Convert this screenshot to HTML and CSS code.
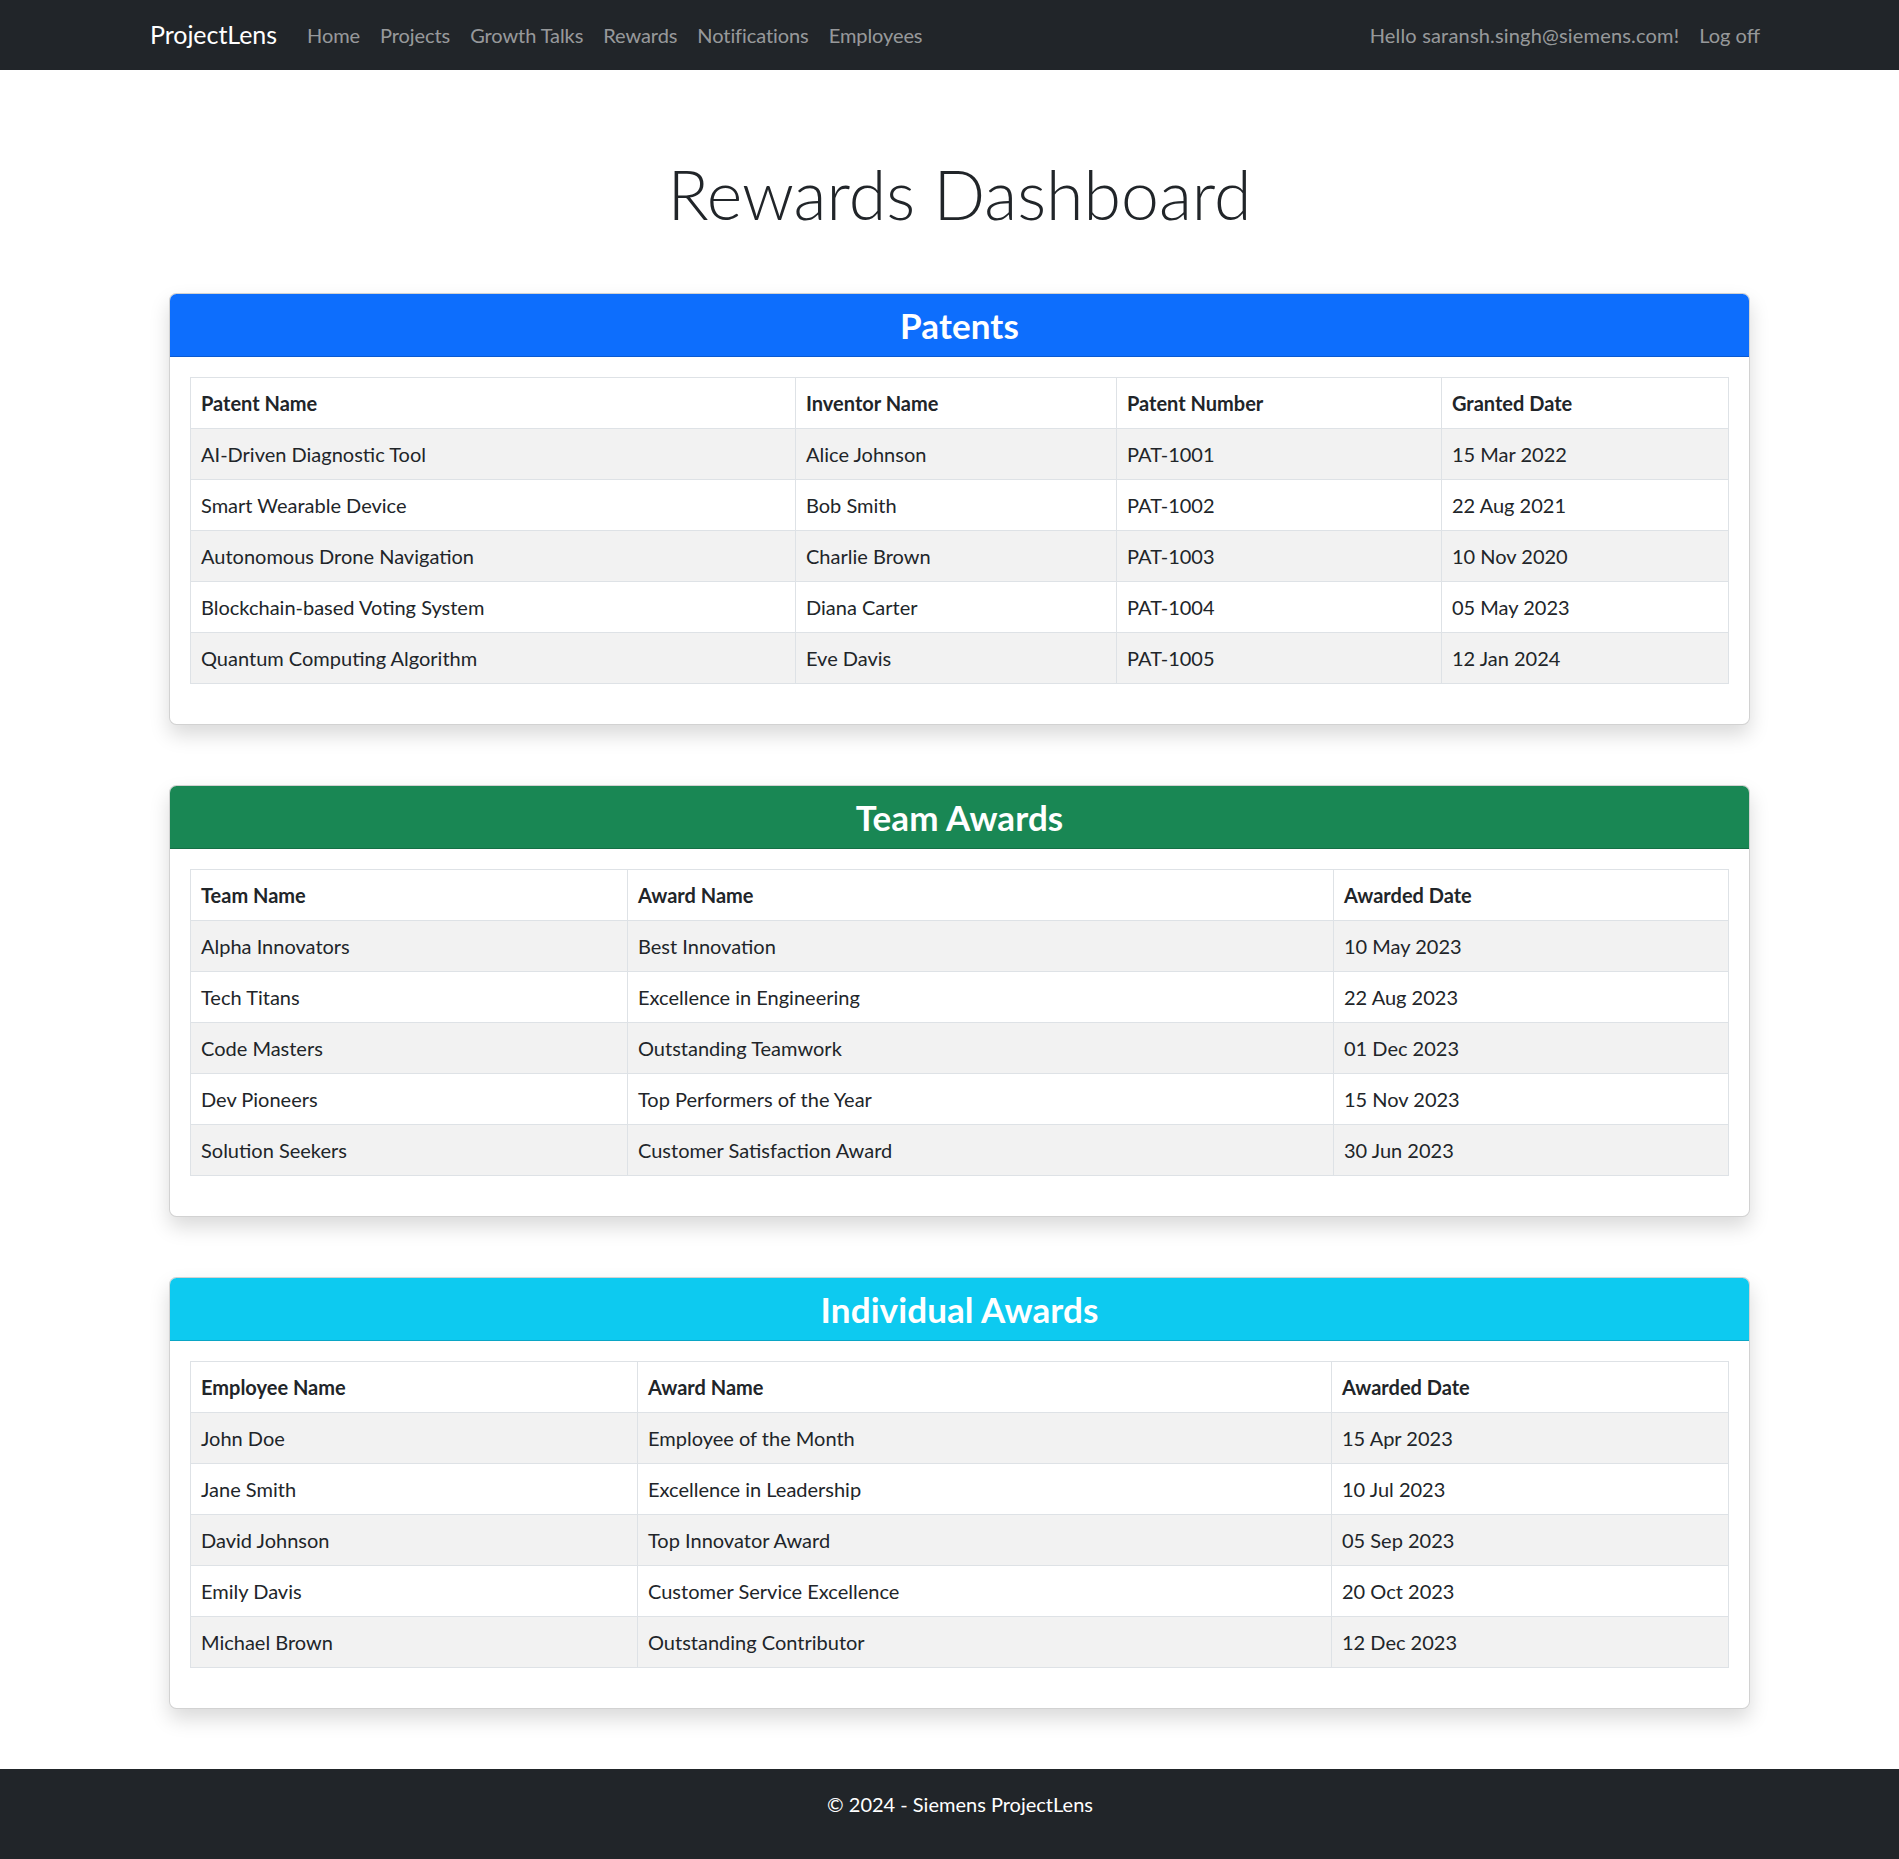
FILE: index.html
```html
<!DOCTYPE html>
<html lang="en">
<head>
<meta charset="utf-8">
<title>Rewards Dashboard - ProjectLens</title>
<link rel="stylesheet" href="styles.css">
</head>
<body>
<header class="navbar">
  <div class="nav-left">
    <a class="brand" href="#">ProjectLens</a>
    <nav class="nav-links">
      <a class="nav-link" href="#">Home</a>
      <a class="nav-link" href="#">Projects</a>
      <a class="nav-link" href="#">Growth Talks</a>
      <a class="nav-link" href="#">Rewards</a>
      <a class="nav-link" href="#">Notifications</a>
      <a class="nav-link" href="#">Employees</a>
    </nav>
  </div>
  <div class="nav-right">
    <a class="nav-link nav-user" href="#">Hello saransh.singh@siemens.com!</a>
    <a class="nav-link" href="#">Log off</a>
  </div>
</header>

<main class="main">
  <h1 class="page-title">Rewards Dashboard</h1>

  <section class="card">
    <div class="card-header header-primary"><h3 class="card-title">Patents</h3></div>
    <div class="card-body">
      <table class="table">
        <colgroup><col class="p1"><col class="p2"><col class="p3"><col></colgroup>
        <thead>
          <tr><th>Patent Name</th><th>Inventor Name</th><th>Patent Number</th><th>Granted Date</th></tr>
        </thead>
        <tbody>
          <tr><td>AI-Driven Diagnostic Tool</td><td>Alice Johnson</td><td>PAT-1001</td><td>15 Mar 2022</td></tr>
          <tr><td>Smart Wearable Device</td><td>Bob Smith</td><td>PAT-1002</td><td>22 Aug 2021</td></tr>
          <tr><td>Autonomous Drone Navigation</td><td>Charlie Brown</td><td>PAT-1003</td><td>10 Nov 2020</td></tr>
          <tr><td>Blockchain-based Voting System</td><td>Diana Carter</td><td>PAT-1004</td><td>05 May 2023</td></tr>
          <tr><td>Quantum Computing Algorithm</td><td>Eve Davis</td><td>PAT-1005</td><td>12 Jan 2024</td></tr>
        </tbody>
      </table>
    </div>
  </section>

  <section class="card">
    <div class="card-header header-success"><h3 class="card-title">Team Awards</h3></div>
    <div class="card-body">
      <table class="table">
        <colgroup><col class="t1"><col class="t2"><col></colgroup>
        <thead>
          <tr><th>Team Name</th><th>Award Name</th><th>Awarded Date</th></tr>
        </thead>
        <tbody>
          <tr><td>Alpha Innovators</td><td>Best Innovation</td><td>10 May 2023</td></tr>
          <tr><td>Tech Titans</td><td>Excellence in Engineering</td><td>22 Aug 2023</td></tr>
          <tr><td>Code Masters</td><td>Outstanding Teamwork</td><td>01 Dec 2023</td></tr>
          <tr><td>Dev Pioneers</td><td>Top Performers of the Year</td><td>15 Nov 2023</td></tr>
          <tr><td>Solution Seekers</td><td>Customer Satisfaction Award</td><td>30 Jun 2023</td></tr>
        </tbody>
      </table>
    </div>
  </section>

  <section class="card">
    <div class="card-header header-info"><h3 class="card-title">Individual Awards</h3></div>
    <div class="card-body">
      <table class="table">
        <colgroup><col class="i1"><col class="i2"><col></colgroup>
        <thead>
          <tr><th>Employee Name</th><th>Award Name</th><th>Awarded Date</th></tr>
        </thead>
        <tbody>
          <tr><td>John Doe</td><td>Employee of the Month</td><td>15 Apr 2023</td></tr>
          <tr><td>Jane Smith</td><td>Excellence in Leadership</td><td>10 Jul 2023</td></tr>
          <tr><td>David Johnson</td><td>Top Innovator Award</td><td>05 Sep 2023</td></tr>
          <tr><td>Emily Davis</td><td>Customer Service Excellence</td><td>20 Oct 2023</td></tr>
          <tr><td>Michael Brown</td><td>Outstanding Contributor</td><td>12 Dec 2023</td></tr>
        </tbody>
      </table>
    </div>
  </section>
</main>

<footer class="footer">
  <p class="footer-text">&copy; 2024 - Siemens ProjectLens</p>
</footer>
</body>
</html>
```
FILE: styles.css
```css
* { box-sizing: border-box; }

html, body {
  margin: 0;
  padding: 0;
}

body {
  font-family: "Lato", "Liberation Sans", sans-serif;
  font-size: 20px;
  line-height: 1.5;
  color: #212529;
  background: #ffffff;
}

a { text-decoration: none; }

/* ---------- Navbar ---------- */
.navbar {
  height: 70px;
  background: #212529;
  display: flex;
  align-items: center;
  justify-content: space-between;
  padding: 0 129px 0 150px;
}

.nav-left,
.nav-right,
.nav-links {
  display: flex;
  align-items: center;
}

.brand {
  color: #ffffff;
  font-size: 25px;
  line-height: 1.5;
  margin-right: 20px;
  letter-spacing: -0.05px;
}

.nav-link {
  color: rgba(255, 255, 255, 0.55);
  padding: 10px 10px;
  line-height: 30px;
  white-space: nowrap;
}

.nav-links .nav-link {
  letter-spacing: -0.08px;
}

.nav-user {
  letter-spacing: 0.18px;
}

/* ---------- Main ---------- */
.main {
  padding: 83px 149px 0 169px;
}

.page-title {
  margin: 0 0 58px;
  text-align: center;
  font-size: 68px;
  font-weight: 300;
  line-height: 82px;
  color: #212529;
}

.card {
  background: #ffffff;
  border: 1px solid rgba(0, 0, 0, 0.175);
  border-radius: 7.5px;
  box-shadow: 0 10px 20px rgba(0, 0, 0, 0.15);
  margin-bottom: 60px;
  overflow: hidden;
}

.card-header {
  padding: 10px 20px;
  border-bottom: 1px solid rgba(0, 0, 0, 0.175);
  text-align: center;
  color: #ffffff;
}

.header-primary { background: #0d6efd; }
.header-success { background: #198754; }
.header-info { background: #0dcaf0; }

.card-title {
  margin: 0;
  font-size: 35px;
  font-weight: 700;
  line-height: 42px;
  letter-spacing: 0.1px;
}

.card-body {
  padding: 20px;
}

/* ---------- Tables ---------- */
.table {
  width: 100%;
  border-collapse: collapse;
  table-layout: fixed;
  margin-bottom: 20px;
  border: 1px solid #dee2e6;
}

.table th,
.table td {
  padding: 10px;
  border: 1px solid #dee2e6;
  text-align: left;
  vertical-align: top;
  line-height: 30px;
  white-space: nowrap;
}

.table th {
  font-weight: 700;
}

.table tbody tr:nth-child(odd) td {
  background: #f2f2f2;
}

.p1 { width: 605px; }
.p2 { width: 321px; }
.p3 { width: 325px; }

.t1 { width: 437px; }
.t2 { width: 706px; }

.i1 { width: 447px; }
.i2 { width: 694px; }

/* ---------- Footer ---------- */
.footer {
  height: 91px;
  background: #212529;
  padding: 20px 149px 0 170px;
  text-align: center;
}

.footer-text {
  margin: 0;
  color: #ffffff;
  line-height: 30px;
}
```
